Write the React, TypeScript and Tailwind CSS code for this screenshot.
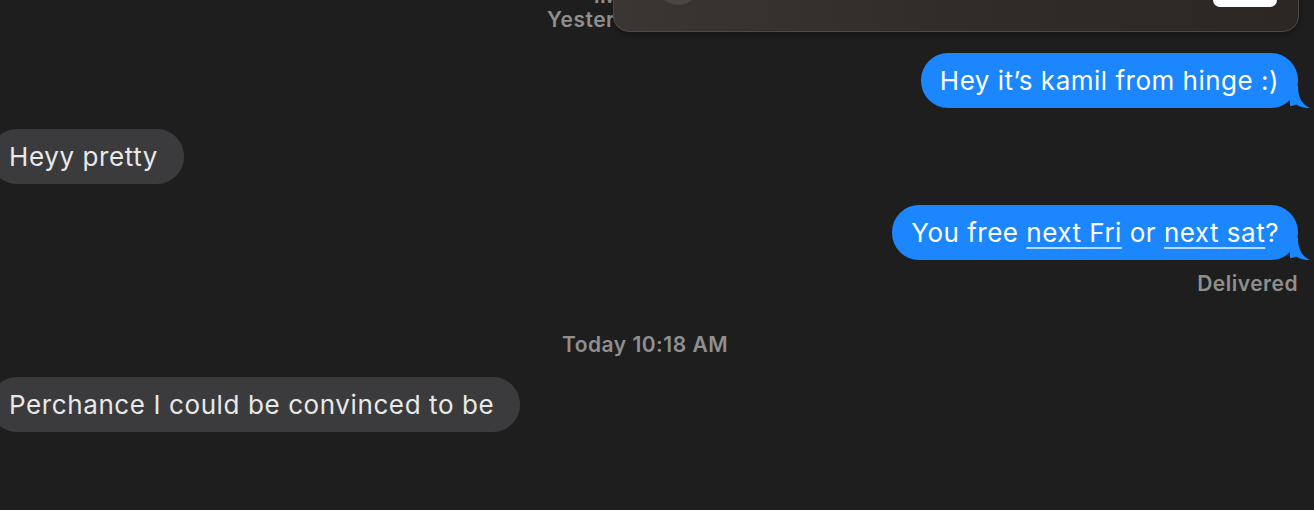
const font = { fontFamily: 'Inter, "Noto Sans", sans-serif' }

function Tail() {
  return (
    <svg
      className="absolute right-[-12px] bottom-0 w-[20px] h-[22px]"
      viewBox="0 0 20 22"
      fill="#1b86fe"
    >
      <path d="M0 0 H8 C8 10 11 18 20 22 C15 22.5 10 21 6 18.5 C4 19.5 2 20 0 20 Z" />
    </svg>
  )
}

function Sent({ children }: { children: React.ReactNode }) {
  return (
    <div className="flex justify-end">
      <div className="relative h-[55px] flex items-center rounded-[27px] bg-[#1b86fe] px-[19px] text-[26px] text-white tracking-[0.5px]">
        <span className="relative z-10">{children}</span>
        <Tail />
      </div>
    </div>
  )
}

function Received({ text }: { text: string }) {
  return (
    <div className="flex justify-start">
      <div className="ml-[-2px] h-[55px] flex items-center rounded-[27px] bg-[#3b3b3d] pl-[19px] pr-[26px] text-[26px] text-[#e8e8e8] tracking-[0.6px]">
        {text}
      </div>
    </div>
  )
}

function Link({ children }: { children: React.ReactNode }) {
  return (
    <span className="underline decoration-[#b9d9ff] decoration-2 underline-offset-[5px]">
      {children}
    </span>
  )
}

export default function App() {
  return (
    <div className="relative w-[1314px] h-[510px] overflow-hidden bg-[#1e1e1e]" style={font}>
      <div className="ml-[-8px] w-[1322px] pr-4 flex flex-col">
        <div className="mt-[-16px] text-center text-[21px] leading-[24px] font-semibold tracking-[0.5px] text-[#8f8f8f]">
          <div>iMessage</div>
          <div>Yesterday 9:41 PM</div>
        </div>

        <div className="mt-[21px] flex flex-col gap-[21px]">
          <Sent>Hey it’s kamil from hinge :)</Sent>
          <Received text="Heyy pretty" />
          <Sent>
            You free <Link>next Fri</Link> or <Link>next sat</Link>?
          </Sent>
        </div>

        <div className="mt-[12px] text-right text-[21px] leading-[24px] font-semibold tracking-[0.5px] text-[#8f8f8f]">
          Delivered
        </div>

        <div className="mt-[37px] text-center text-[21px] leading-[24px] font-semibold tracking-[0.5px] text-[#8f8f8f]">
          Today 10:18 AM
        </div>

        <div className="mt-[20px]">
          <Received text="Perchance I could be convinced to be" />
        </div>
      </div>

      {/* notification banner sliding over the top */}
      <div className="absolute left-[613px] top-[-50px] w-[686px] h-[82px] rounded-[16px] border border-[#4e4945] bg-gradient-to-r from-[#3a3633] via-[#312c29] to-[#2c2724] overflow-hidden shadow-[0_2px_6px_rgba(0,0,0,0.35)]">
        <div className="absolute left-[42px] top-[-10px] w-[44px] h-[64px] rounded-full bg-[#4a4643]" />
        <div className="absolute left-[599px] top-0 w-[64px] h-[56px] rounded-b-[7px] bg-white" />
      </div>
    </div>
  )
}
